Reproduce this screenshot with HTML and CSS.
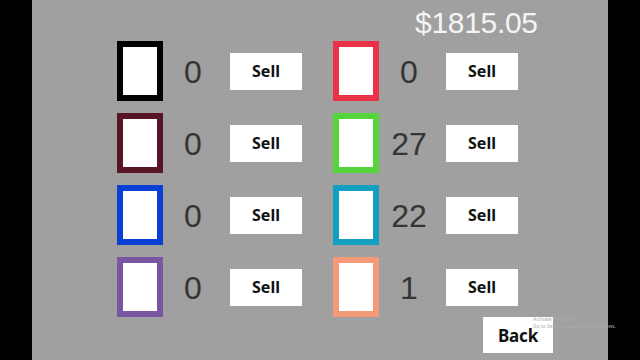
FILE: index.html
```html
<!DOCTYPE html>
<html>
<head>
<meta charset="utf-8">
<link rel="stylesheet" href="styles.css">
</head>
<body>
<div class="screen">
  <div class="stage">
    <div class="header"><span class="money">$1815.05</span></div>
    <div class="grid">
      <div class="item"><div class="card c-black"></div><div class="count">0</div><button class="sell">Sell</button></div>
      <div class="item"><div class="card c-red"></div><div class="count">0</div><button class="sell">Sell</button></div>
      <div class="item"><div class="card c-maroon"></div><div class="count">0</div><button class="sell">Sell</button></div>
      <div class="item"><div class="card c-green"></div><div class="count">27</div><button class="sell">Sell</button></div>
      <div class="item"><div class="card c-blue"></div><div class="count">0</div><button class="sell">Sell</button></div>
      <div class="item"><div class="card c-teal"></div><div class="count">22</div><button class="sell">Sell</button></div>
      <div class="item"><div class="card c-purple"></div><div class="count">0</div><button class="sell">Sell</button></div>
      <div class="item"><div class="card c-salmon"></div><div class="count">1</div><button class="sell">Sell</button></div>
    </div>
    <div class="footer"><button class="back">Back</button></div>
    <div class="watermark"><div>Activate Windows</div><div>Go to Settings to activate Windows.</div></div>
  </div>
</div>
</body>
</html>
```

FILE: styles.css
```css
html, body {
  margin: 0;
  padding: 0;
  background: #000;
}
.screen {
  width: 640px;
  height: 360px;
  display: flex;
  justify-content: center;
  background: #000;
  overflow: hidden;
}
.stage {
  position: relative;
  width: 576px;
  height: 360px;
  background: #a0a0a0;
  display: flex;
  flex-direction: column;
}
.header {
  height: 41px;
  box-sizing: border-box;
  padding-top: 6px;
  padding-left: 383px;
}
.money {
  font-family: "Liberation Sans", Arial, sans-serif;
  font-size: 30px;
  line-height: 34px;
  color: #f4f4f4;
  letter-spacing: -0.3px;
}
.grid {
  display: grid;
  grid-template-columns: 185px 185px;
  grid-auto-rows: 60px;
  column-gap: 31px;
  row-gap: 12px;
  padding-left: 85px;
}
.item {
  display: flex;
  align-items: center;
}
.card {
  width: 46px;
  height: 60px;
  box-sizing: border-box;
  border: 6px solid #000;
  background: #fff;
}
.c-black { border-color: #000000; }
.c-maroon { border-color: #561626; }
.c-blue { border-color: #0a3fd6; }
.c-purple { border-color: #7a55a0; }
.c-red { border-color: #ea3348; }
.c-green { border-color: #55d43c; }
.c-teal { border-color: #139fbf; }
.c-salmon { border-color: #f59a78; }
.count {
  width: 60px;
  text-align: center;
  font-family: "Liberation Sans", Arial, sans-serif;
  font-size: 32px;
  color: #353535;
  padding-top: 3px;
}
.sell, .back {
  border: none;
  background: #fff;
  font-family: "Noto Sans", "Open Sans", sans-serif;
  font-weight: 700;
  color: #111;
  padding: 0;
}
.sell {
  margin-left: 7px;
  width: 72px;
  height: 37px;
  font-size: 16px;
}
.footer {
  padding-left: 451px;
}
.back {
  width: 70px;
  height: 36px;
  font-size: 17px;
  letter-spacing: -0.2px;
}
.watermark {
  position: absolute;
  left: 501px;
  top: 316px;
  font-family: "Noto Sans", sans-serif;
  font-size: 5px;
  line-height: 7px;
  color: #acacac;
  white-space: nowrap;
}
```
